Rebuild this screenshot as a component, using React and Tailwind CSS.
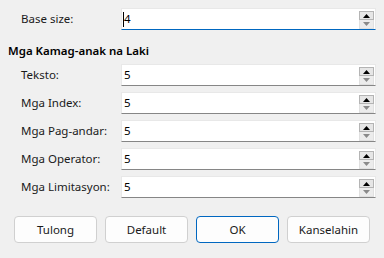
import { useState } from "react";

function SpinBox({ value, focused }) {
  return (
    <div
      className={
        focused
          ? "relative flex items-center w-[255px] h-[22px] bg-white border border-[#e8e8e8] border-b-[#0067c0]"
          : "relative flex items-center w-[255px] h-[22px] bg-white border border-[#e8e8e8] border-b-[#868686]"
      }
    >
      {focused && <span className="absolute left-[1px] top-[3px] w-px h-[15px] bg-black" />}
      <span className="pl-[2px] text-[11.5px] leading-none text-black">{value}</span>

      {/* SPIN BUTTONS */}
      <div className="absolute right-[1px] top-[2px] flex flex-col w-[15px]">
        <div className="h-[9px] flex items-center justify-center bg-[#e6e6e6] border border-[#b4b4b4]">
          <svg width="7" height="4" viewBox="0 0 7 4">
            <polygon points="0,4 7,4 3.5,0" fill="#000" />
          </svg>
        </div>
        <div className="h-[9px] flex items-center justify-center bg-[#ececec] border border-[#e0e0e0] border-t-0">
          <svg width="7" height="4" viewBox="0 0 7 4">
            <polygon points="0,0 7,0 3.5,4" fill="#8a8a8a" />
          </svg>
        </div>
      </div>
    </div>
  );
}

function Row({ label, value, focused }) {
  return (
    <div className="flex items-center h-[22px]">
      <div className="w-[121px] pl-[21px] text-[11.5px] text-[#1a1a1a]">{label}</div>
      <SpinBox value={value} focused={focused} />
    </div>
  );
}

function Btn({ children, primary }) {
  return (
    <button
      className={
        primary
          ? "w-[83px] h-[27px] rounded-[4px] bg-[#fdfdfd] border border-[#0067c0] text-[11.5px] text-[#1a1a1a]"
          : "w-[83px] h-[27px] rounded-[4px] bg-[#fdfdfd] border border-[#d0d0d0] text-[11.5px] text-[#1a1a1a]"
      }
    >
      {children}
    </button>
  );
}

export default function App() {
  const [sizes] = useState([
    ["Teksto:", "5"],
    ["Mga Index:", "5"],
    ["Mga Pag-andar:", "5"],
    ["Mga Operator:", "5"],
    ["Mga Limitasyon:", "5"]
  ]);

  return (
    <div
      className="w-[384px] h-[258px] bg-[#f0f0f0] pt-[8px] flex flex-col overflow-hidden"
      style={{ fontFamily: '"Noto Sans", "Open Sans", sans-serif' }}
    >
      {/* BASE SIZE */}
      <Row label="Base size:" value="4" focused />

      {/* HEADING */}
      <div className="mt-[13px] pl-[8px] h-[16px] leading-[16px] text-[11.5px] font-semibold text-black">
        Mga Kamag-anak na Laki
      </div>

      <div className="mt-[5px] flex flex-col gap-[6px]">
        {sizes.map(([label, value]) => (
          <Row key={label} label={label} value={value} />
        ))}
      </div>

      {/* BUTTONS */}
      <div className="mt-[18px] pl-[14px] flex gap-[8px]">
        <Btn>Tulong</Btn>
        <Btn>Default</Btn>
        <Btn primary>OK</Btn>
        <Btn>Kanselahin</Btn>
      </div>
    </div>
  );
}
